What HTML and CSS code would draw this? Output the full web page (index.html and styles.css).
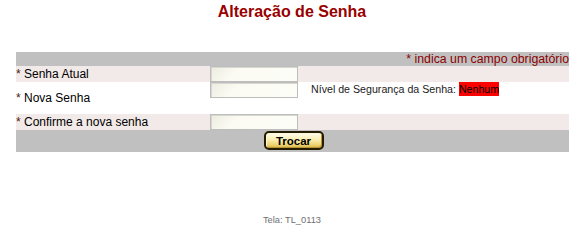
FILE: index.html
```html
<!DOCTYPE html>
<html lang="pt-BR">
<head>
<meta charset="utf-8">
<title>Alteração de Senha</title>
<link rel="stylesheet" href="styles.css">
</head>
<body>
<h1 class="title">Alteração de Senha</h1>
<form class="form">
  <div class="req-bar"><span class="req-star">*</span> indica um campo obrigatório</div>
  <div class="row shaded">
    <label class="lbl"><span class="star">*</span> Senha Atual</label>
    <div class="field"><input class="input" type="password"></div>
    <div class="extra"></div>
  </div>
  <div class="row tall">
    <label class="lbl mid"><span class="star">*</span> Nova Senha</label>
    <div class="field"><input class="input" type="password"></div>
    <div class="extra">Nível de Segurança da Senha: <span class="level">Nenhum</span></div>
  </div>
  <div class="row shaded">
    <label class="lbl"><span class="star">*</span> Confirme a nova senha</label>
    <div class="field"><input class="input" type="password"></div>
    <div class="extra"></div>
  </div>
  <div class="btn-bar"><button class="btn" type="button">Trocar</button></div>
</form>
<div class="footer">Tela: TL_0113</div>
</body>
</html>
```
FILE: styles.css
```css
html, body {
  margin: 0;
  padding: 0;
  background: #ffffff;
  font-family: "Liberation Sans", Arial, sans-serif;
}

.title {
  margin: 3px 0 0 0;
  font-size: 16px;
  line-height: 18px;
  font-weight: bold;
  color: #990000;
  text-align: center;
}

.form {
  margin: 31px 0 0 16px;
  width: 553px;
}

.req-bar {
  height: 14px;
  line-height: 14px;
  background: #c0c0c0;
  color: #8c0000;
  font-size: 12.3px;
  text-align: right;
  white-space: nowrap;
  overflow: hidden;
}

.row {
  display: grid;
  grid-template-columns: 194px 88px 1fr;
  height: 16px;
}

.row.shaded {
  background: #f2eae8;
}

.row.tall {
  height: 32px;
  background: #ffffff;
}

.lbl {
  font-size: 12px;
  line-height: 16px;
  color: #000000;
  white-space: nowrap;
}

.lbl.mid {
  align-self: center;
}

.star {
  color: #4a1a10;
}

.field {
  display: flex;
  align-items: flex-start;
}

.input {
  box-sizing: border-box;
  width: 88px;
  height: 16px;
  margin: 0;
  padding: 0;
  border: 1px solid #bdbdbd;
  background: linear-gradient(135deg, #ecece0 0%, #fbfbf3 30%, #fdfdf8 100%);
  box-shadow: inset 1px 1px 0 #d8d8d0;
  outline: none;
}

.extra {
  padding-left: 13px;
  font-size: 10.65px;
  line-height: 14px;
  color: #222222;
  white-space: nowrap;
}

.level {
  display: inline-block;
  height: 14px;
  line-height: 14px;
  background: #ff0000;
  color: #000000;
  vertical-align: top;
}

.btn-bar {
  height: 22px;
  background: #c0c0c0;
  display: flex;
  justify-content: center;
  align-items: flex-start;
}

.btn {
  box-sizing: border-box;
  width: 60px;
  height: 19px;
  margin: 1px 0 0 2px;
  padding: 0;
  border: 2px solid #241c00;
  border-radius: 5px;
  background: linear-gradient(180deg, #fffdf0 0%, #fbeeb0 45%, #ecd270 80%, #d6b244 100%);
  box-shadow: inset 1px 1px 0 #fff8d8, inset -1px -1px 0 #b89530;
  font-family: "Liberation Sans", Arial, sans-serif;
  font-size: 11.5px;
  font-weight: bold;
  color: #000000;
  line-height: 14px;
}

.footer {
  margin-top: 63px;
  font-size: 9.3px;
  line-height: 11px;
  color: #707070;
  text-align: center;
}
```
